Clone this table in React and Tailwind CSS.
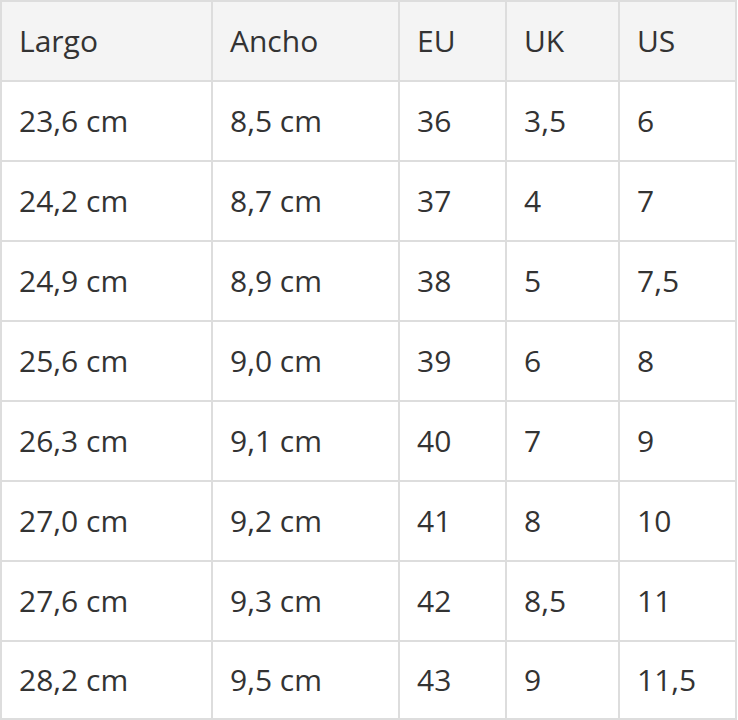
import React from 'react'

// Shoe size chart (Largo / Ancho / EU / UK / US)
const headers = ['Largo', 'Ancho', 'EU', 'UK', 'US']

const rows = [
  ['23,6 cm', '8,5 cm', '36', '3,5', '6'],
  ['24,2 cm', '8,7 cm', '37', '4', '7'],
  ['24,9 cm', '8,9 cm', '38', '5', '7,5'],
  ['25,6 cm', '9,0 cm', '39', '6', '8'],
  ['26,3 cm', '9,1 cm', '40', '7', '9'],
  ['27,0 cm', '9,2 cm', '41', '8', '10'],
  ['27,6 cm', '9,3 cm', '42', '8,5', '11'],
  ['28,2 cm', '9,5 cm', '43', '9', '11,5']
]

export default function App() {
  return (
    <div
      className="w-[738px] h-[720px] overflow-hidden bg-white text-[#333333]"
      style={{ fontFamily: '"Open Sans", "Noto Sans", sans-serif' }}
    >
      <div className="grid w-[737px] grid-cols-[209px_185px_105px_111px_115px] grid-rows-[78px_78px_78px_78px_78px_78px_78px_78px_76px] gap-[2px] bg-[#dddddd] p-[2px]">
        {headers.map(h => (
          <div
            key={h}
            className="flex items-center bg-[#f4f4f4] pl-[17px] text-[30px] leading-none"
          >
            {h}
          </div>
        ))}
        {rows.map((row, i) =>
          row.map((cell, j) => (
            <div
              key={`${i}-${j}`}
              className="flex items-center bg-white pl-[17px] text-[30px] leading-none"
            >
              {cell}
            </div>
          ))
        )}
      </div>
    </div>
  )
}
